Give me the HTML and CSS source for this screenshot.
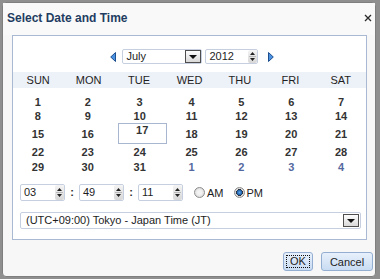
FILE: index.html
```html
<!DOCTYPE html>
<html lang="en">

<head>
  <meta charset="UTF-8" />
  <title>Select Date and Time</title>
  <link rel="stylesheet" href="styles.css">
</head>

<body>
  <div class="dialog">
    <div class="titlebar">
      <span class="title">Select Date and Time</span>
      <svg class="close" width="8" height="8" viewBox="0 0 8 8">
        <path d="M1 1L7 7M7 1L1 7" stroke="#2a2a2a" stroke-width="1.3" />
      </svg>
    </div>

    <div class="panel">
      <!-- month / year navigation -->
      <div class="nav">
        <svg class="arrow" width="6" height="10" viewBox="0 0 6 10">
          <path d="M5.5 0.5L0.7 5L5.5 9.5Z" fill="#4b92e2" stroke="#1e4f8e" />
        </svg>
        <div class="select month">
          <span class="value">July</span>
          <span class="drop"><i></i></span>
        </div>
        <div class="field year">
          <span class="value">2012</span>
          <span class="spin">
            <svg width="9" height="15" viewBox="0 0 9 15">
              <path d="M4.5 3L7 6H2Z M4.5 12L7 9H2Z" fill="#222" />
              <path d="M1 7.5H8" stroke="#b9b9b9" />
            </svg>
          </span>
        </div>
        <svg class="arrow next" width="6" height="10" viewBox="0 0 6 10">
          <path d="M0.5 0.5L5.3 5L0.5 9.5Z" fill="#4b92e2" stroke="#1e4f8e" />
        </svg>
      </div>

      <div class="days head">
        <span>SUN</span><span>MON</span><span>TUE</span><span>WED</span><span>THU</span><span>FRI</span><span>SAT</span>
      </div>

      <div class="days dates">
        <span>1</span><span>2</span><span>3</span><span>4</span><span>5</span><span>6</span><span>7</span>
        <span>8</span><span>9</span><span>10</span><span>11</span><span>12</span><span>13</span><span>14</span>
        <span>15</span><span>16</span><span class="sel">17</span><span>18</span><span>19</span><span>20</span><span>21</span>
        <span>22</span><span>23</span><span>24</span><span>25</span><span>26</span><span>27</span><span>28</span>
        <span>29</span><span>30</span><span>31</span><span class="other">1</span><span class="other">2</span><span class="other">3</span><span class="other">4</span>
      </div>

      <!-- hour : minute : second -->
      <div class="time">
        <div class="field hms">
          <span class="value">03</span>
          <span class="spin">
            <svg width="9" height="15" viewBox="0 0 9 15">
              <path d="M4.5 3L7 6H2Z M4.5 12L7 9H2Z" fill="#222" />
              <path d="M1 7.5H8" stroke="#b9b9b9" />
            </svg>
          </span>
        </div>
        <span class="colon">:</span>
        <div class="field hms">
          <span class="value">49</span>
          <span class="spin">
            <svg width="9" height="15" viewBox="0 0 9 15">
              <path d="M4.5 3L7 6H2Z M4.5 12L7 9H2Z" fill="#222" />
              <path d="M1 7.5H8" stroke="#b9b9b9" />
            </svg>
          </span>
        </div>
        <span class="colon">:</span>
        <div class="field hms">
          <span class="value">11</span>
          <span class="spin">
            <svg width="9" height="15" viewBox="0 0 9 15">
              <path d="M4.5 3L7 6H2Z M4.5 12L7 9H2Z" fill="#222" />
              <path d="M1 7.5H8" stroke="#b9b9b9" />
            </svg>
          </span>
        </div>
        <label class="radio am"><span class="dot"></span>AM</label>
        <label class="radio"><span class="dot on"></span>PM</label>
      </div>

      <div class="select zone">
        <span class="value">(UTC+09:00) Tokyo - Japan Time (JT)</span>
        <span class="drop"><i></i></span>
      </div>
    </div>

    <div class="footer">
      <button class="btn ok"><span>OK</span></button>
      <button class="btn cancel">Cancel</button>
    </div>
  </div>
</body>

</html>
```

FILE: styles.css
```css
* {
  margin: 0;
  padding: 0;
  box-sizing: border-box;
}

body {
  background: #8f8f8f;
  font-family: "Liberation Sans", Arial, sans-serif;
  font-size: 11px;
  color: #2b2b2b;
}

.dialog {
  width: 374px;
  height: 275px;
  margin: 2px 0 0 2px;
  border: 1px solid #7f7f7f;
  border-radius: 4px;
  background: #f7f7f7;
}

.titlebar {
  height: 32px;
  padding: 8px 3px 0 4px;
  display: flex;
  justify-content: space-between;
  align-items: flex-start;
  background: #f9f9f9;
}

.title {
  font-size: 12px;
  font-weight: bold;
  line-height: 14px;
  color: #1f3d62;
}

.close {
  margin-top: 3px;
}

.panel {
  height: 205px;
  margin: 0 8px 0 9px;
  border: 1px solid #a9b8d3;
  background: #fff;
}

/* navigation */
.nav {
  height: 15px;
  margin-top: 13px;
  padding-left: 4px;
  display: flex;
  justify-content: center;
  align-items: center;
}

.arrow {
  margin-right: 6px;
}

.arrow.next {
  margin: 0 0 0 10px;
}

.select,
.field {
  display: flex;
  align-items: stretch;
  border: 1px solid #c6cfdf;
  border-radius: 2px;
  background: #fff;
}

.value {
  flex: 1;
  padding-left: 4px;
  line-height: 13px;
  white-space: nowrap;
  color: #1d1d1d;
  display: flex;
  align-items: center;
}

.drop {
  width: 16px;
  margin: 0;
  border: 1px solid #4e4e4e;
  background: linear-gradient(#fdfdfd, #d9d9d9);
  display: flex;
  justify-content: center;
  align-items: center;
}

.drop i {
  border-left: 4px solid transparent;
  border-right: 4px solid transparent;
  border-top: 4px solid #111;
  margin-top: 1px;
}

.spin {
  width: 9px;
  border-radius: 2px;
  background: linear-gradient(#f4f4f4, #d7d7d7);
  display: flex;
  align-items: center;
}

.month {
  width: 80px;
  height: 15px;
}

.year {
  width: 53px;
  height: 15px;
  margin-left: 3px;
}

/* calendar */
.days {
  display: grid;
  grid-template-columns: repeat(7, 1fr);
}

.days span {
  display: flex;
  justify-content: center;
  align-items: center;
}

.head {
  height: 16px;
  margin-top: 8px;
  background: #edf1f8;
  color: #1f1f1f;
}

.dates {
  margin-top: 6px;
  grid-template-rows: 15px 14px 21px 15px 15px;
  font-weight: bold;
  color: #333;
}

.dates .sel {
  width: 49px;
  justify-self: center;
  align-items: flex-start;
  border: 1px solid #a9b6cf;
  line-height: 12px;
  margin-left: 5px;
}

.dates .other {
  color: #5468a0;
}

/* time */
.time {
  height: 17px;
  margin-top: 10px;
  padding-left: 7px;
  display: flex;
  align-items: stretch;
}

.hms {
  width: 45px;
}

.hms .value {
  padding-left: 3px;
}

.colon {
  width: 14px;
  text-align: center;
  line-height: 16px;
  font-weight: bold;
}

.radio {
  display: flex;
  align-items: center;
  color: #1d1d1d;
}

.radio.am {
  margin-left: 11px;
  margin-right: 10px;
}

.dot {
  width: 11px;
  height: 11px;
  margin-right: 2px;
  border: 1px solid #8c8c8c;
  border-radius: 50%;
  background: radial-gradient(circle, #f3f3f3 30%, #cfcfcf 100%);
}

.dot.on {
  background: radial-gradient(circle, #5fa8ee 0, #1a5ba3 2.5px, #2c2c2c 3.2px, #dedede 3.6px, #cfcfcf 100%);
}

.zone {
  width: 341px;
  height: 17px;
  margin: 11px 0 0 7px;
  padding: 0 1px 0 1px;
}

.zone .value {
  padding-left: 4px;
  font-size: 11px;
}

.zone .drop {
  width: 16px;
  margin: 1px 0;
}

/* buttons */
.footer {
  padding: 12px 2px 0 0;
  display: flex;
  justify-content: flex-end;
  gap: 8px;
}

.btn {
  height: 19px;
  border: 1px solid #94aed2;
  border-radius: 3px;
  background: linear-gradient(#e7f0fb, #c9dcf3);
  font-family: "Liberation Sans", Arial, sans-serif;
  font-size: 11px;
  color: #1d1d1d;
}

.ok {
  width: 30px;
  padding: 2px;
}

.ok span {
  display: block;
  height: 13px;
  line-height: 11px;
  border: 1px dotted #111;
}

.cancel {
  width: 52px;
}
```
